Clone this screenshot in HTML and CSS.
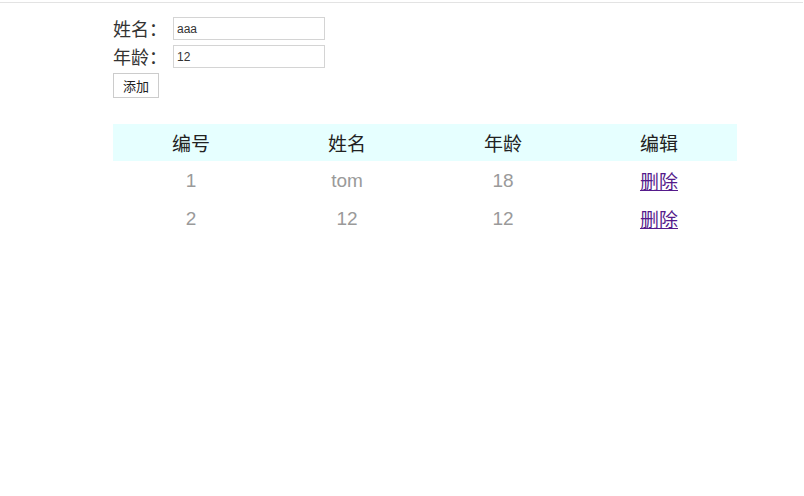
FILE: index.html
```html
<!DOCTYPE html>
<html lang="zh">
<head>
<meta charset="utf-8">
<title>表格</title>
<link rel="stylesheet" href="styles.css">
</head>
<body>
<div class="topline"></div>
<div class="wrap">
  <div class="form">
    <div class="field"><label class="lbl">姓名：</label><input class="inp" type="text" value="aaa"></div>
    <div class="field"><label class="lbl">年龄：</label><input class="inp" type="text" value="12"></div>
    <button class="btn">添加</button>
  </div>
  <table class="tbl">
    <thead>
      <tr><th>编号</th><th>姓名</th><th>年龄</th><th>编辑</th></tr>
    </thead>
    <tbody>
      <tr><td>1</td><td>tom</td><td>18</td><td><a href="#" class="del">删除</a></td></tr>
      <tr><td>2</td><td>12</td><td>12</td><td><a href="#" class="del">删除</a></td></tr>
    </tbody>
  </table>
</div>
</body>
</html>
```
FILE: styles.css
```css
html, body {
  margin: 0;
  padding: 0;
  background: #fff;
}
body {
  font-family: "Noto Sans CJK SC", "Liberation Sans", sans-serif;
}
.topline {
  margin-top: 2px;
  border-top: 1px solid #e3e3e3;
  width: 803px;
}
.wrap {
  padding-left: 113px;
  padding-top: 14px;
}
.form {
  display: flex;
  flex-direction: column;
  align-items: flex-start;
  gap: 5px;
}
.field {
  display: flex;
  align-items: center;
  height: 23px;
}
.lbl {
  font-size: 18px;
  color: #333;
  width: 60px;
  line-height: 23px;
}
.inp {
  box-sizing: border-box;
  width: 152px;
  height: 23px;
  border: 1px solid #d4d4d4;
  padding: 0 3px;
  font-family: "Liberation Sans", sans-serif;
  font-size: 12px;
  color: #333;
  outline: none;
}
.btn {
  box-sizing: border-box;
  width: 46px;
  height: 25px;
  background: #fff;
  border: 1px solid #ccc;
  font-family: "Noto Sans CJK SC", sans-serif;
  font-size: 13px;
  color: #222;
  padding: 0;
}
.tbl {
  margin-top: 26px;
  width: 624px;
  border-collapse: collapse;
  table-layout: fixed;
}
.tbl th {
  background: #e6ffff;
  height: 37px;
  font-weight: normal;
  font-size: 19px;
  color: #222;
  padding: 0;
}
.tbl td {
  height: 37px;
  padding: 1px 0 0;
  text-align: center;
  font-family: "Liberation Sans", "Noto Sans CJK SC", sans-serif;
  font-size: 19px;
  color: #9a9a9a;
}
.del {
  color: #551a8b;
  font-family: "Noto Sans CJK SC", sans-serif;
}
```
